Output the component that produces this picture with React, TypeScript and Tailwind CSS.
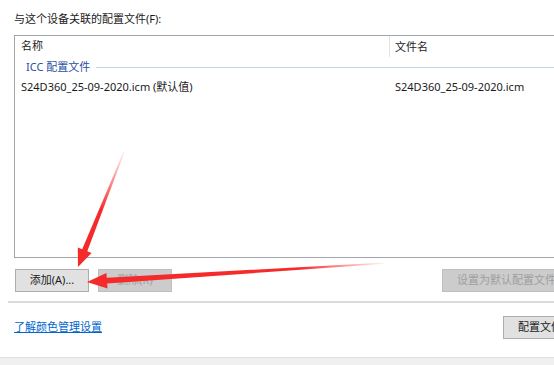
import React from 'react';

const font = { fontFamily: '"Noto Sans", "Noto Sans CJK SC", sans-serif' };

function Arrows() {
  return (
    <svg
      className="pointer-events-none absolute left-0 top-0"
      width="554"
      height="365"
      viewBox="0 0 554 365"
    >
      <defs>
        <linearGradient id="fadeA" gradientUnits="userSpaceOnUse" x1="124" y1="152" x2="100" y2="210">
          <stop offset="0" stopColor="#ff3b3b" stopOpacity="0.1" />
          <stop offset="1" stopColor="#f52a2a" stopOpacity="1" />
        </linearGradient>
        <linearGradient id="fadeB" gradientUnits="userSpaceOnUse" x1="385" y1="263" x2="300" y2="268">
          <stop offset="0" stopColor="#ff3b3b" stopOpacity="0.05" />
          <stop offset="1" stopColor="#f52a2a" stopOpacity="1" />
        </linearGradient>
      </defs>
      <polygon
        points="124.5,152.2 87.3,251.3 91.6,253 78,267 77.8,247.5 82.2,249.3 123.5,151.8"
        fill="url(#fadeA)"
      />
      <polygon
        points="385,263.7 107.2,283.6 107.5,288.5 87,282 106.4,273 106.8,277.8 385,262.4"
        fill="url(#fadeB)"
      />
    </svg>
  );
}

export default function App() {
  return (
    <div className="relative h-[365px] w-[554px] overflow-hidden bg-white text-[11px] text-[#1a1a1a]" style={font}>
      <div className="pl-[14px] pt-[10px] leading-[17px]">与这个设备关联的配置文件(F):</div>

      <div className="ml-[14px] mt-[8px] h-[223px] w-[580px] border border-[#a0a4ab]">
        <div className="flex h-[21px] items-center">
          <div className="w-[374px] pl-[6px]">名称</div>
          <div className="h-full border-l border-[#e3e3e3] pl-[5px] leading-[21px]">文件名</div>
        </div>
        <div className="flex h-[20px] items-center pl-[11px] text-[#1f4fa3]">
          <span>ICC 配置文件</span>
          <div className="ml-[6px] h-px flex-1 bg-[#c8d3ea]" />
        </div>
        <div className="flex h-[20px] items-center">
          <div className="w-[375px] pl-[6px]">S24D360_25-09-2020.icm (默认值)</div>
          <div className="pl-[5px]">S24D360_25-09-2020.icm</div>
        </div>
      </div>

      <div className="mt-[11px] flex items-center whitespace-nowrap pl-[15px]">
        <button className="h-[23px] w-[74px] shrink-0 border border-[#adadad] bg-[#e1e1e1] text-[11px] text-[#1a1a1a]">
          添加(A)...
        </button>
        <button className="ml-[9px] h-[23px] w-[74px] shrink-0 border border-[#bfbfbf] bg-[#cccccc] text-[11px] text-[#9e9e9e]">
          删除(R)
        </button>
        <button className="ml-[270px] h-[23px] w-[140px] shrink-0 border border-[#bfbfbf] bg-[#cccccc] pl-[14px] text-left text-[11px] text-[#9e9e9e]">
          设置为默认配置文件(D)
        </button>
      </div>

      <div className="ml-[8px] mt-[9px] h-[2px] bg-[#dcdcdc]" />

      <div className="mt-[13px] flex h-[23px] items-center whitespace-nowrap">
        <a className="ml-[14px] text-[#0066cc] underline">了解颜色管理设置</a>
        <button className="ml-auto mr-[-40px] h-[23px] w-[91px] shrink-0 border border-[#adadad] bg-[#e1e1e1] pl-[14px] text-left text-[11px] text-[#1a1a1a]">
          配置文件...
        </button>
      </div>

      <div className="mt-[18px] h-[10px] border-t border-[#dfdfdf] bg-[#f0f0f0]" />

      <Arrows />
    </div>
  );
}
